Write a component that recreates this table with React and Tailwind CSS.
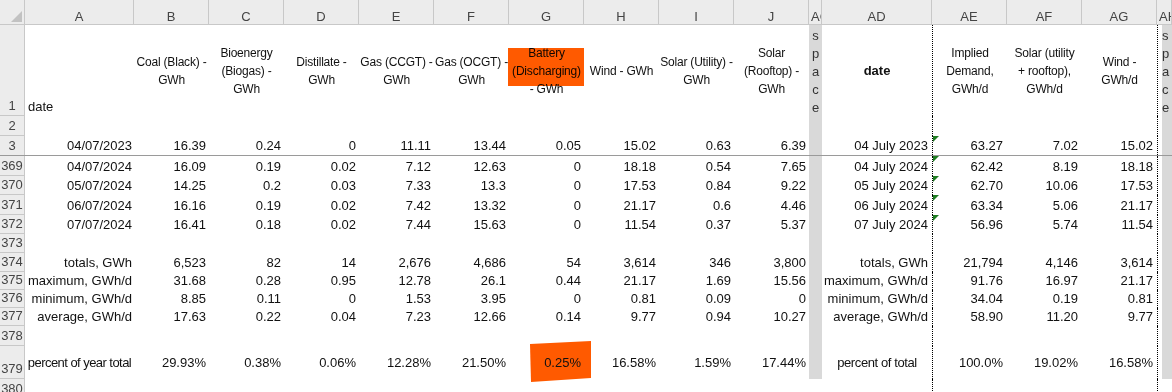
import React from "react";

const FONT = "font-['Liberation_Sans',Arial,sans-serif]";

const COLS = [
  { k: "A", w: "w-[109px]" },
  { k: "B", w: "w-[75px]" },
  { k: "C", w: "w-[75px]" },
  { k: "D", w: "w-[75px]" },
  { k: "E", w: "w-[75px]" },
  { k: "F", w: "w-[75px]" },
  { k: "G", w: "w-[75px]" },
  { k: "H", w: "w-[75px]" },
  { k: "I", w: "w-[75px]" },
  { k: "J", w: "w-[75px]" },
  { k: "AC", w: "w-[13px]", clip: true },
  { k: "AD", w: "w-[110px]" },
  { k: "AE", w: "w-[75px]" },
  { k: "AF", w: "w-[75px]" },
  { k: "AG", w: "w-[75px]" },
  { k: "AH", w: "w-[15px]", clip: true },
];

const heads = {
  B: ["Coal (Black) -", "GWh"],
  C: ["Bioenergy", "(Biogas) -", "GWh"],
  D: ["Distillate -", "GWh"],
  E: ["Gas (CCGT) -", "GWh"],
  F: ["Gas (OCGT) -", "GWh"],
  G: ["Battery", "(Discharging)", "- GWh"],
  H: ["Wind -  GWh"],
  I: ["Solar (Utility) -", "GWh"],
  J: ["Solar", "(Rooftop) -", "GWh"],
};

const rightHeads = [
  ["Implied", "Demand,", "GWh/d"],
  ["Solar (utility", "+ rooftop),", "GWh/d"],
  ["Wind -", "GWh/d"],
];

const rows = [
  { n: "2", h: "h-[20px]" },
  {
    n: "3", h: "h-[20px]", freeze: true, flag: true,
    left: ["04/07/2023", "16.39", "0.24", "0", "11.11", "13.44", "0.05", "15.02", "0.63", "6.39"],
    right: ["04 July 2023", "63.27", "7.02", "15.02"],
  },
  {
    n: "369", h: "h-[20px]", flag: true,
    left: ["04/07/2024", "16.09", "0.19", "0.02", "7.12", "12.63", "0", "18.18", "0.54", "7.65"],
    right: ["04 July 2024", "62.42", "8.19", "18.18"],
  },
  {
    n: "370", h: "h-[19px]", flag: true,
    left: ["05/07/2024", "14.25", "0.2", "0.03", "7.33", "13.3", "0", "17.53", "0.84", "9.22"],
    right: ["05 July 2024", "62.70", "10.06", "17.53"],
  },
  {
    n: "371", h: "h-[20px]", flag: true,
    left: ["06/07/2024", "16.16", "0.19", "0.02", "7.42", "13.32", "0", "21.17", "0.6", "4.46"],
    right: ["06 July 2024", "63.34", "5.06", "21.17"],
  },
  {
    n: "372", h: "h-[19px]", flag: true,
    left: ["07/07/2024", "16.41", "0.18", "0.02", "7.44", "15.63", "0", "11.54", "0.37", "5.37"],
    right: ["07 July 2024", "56.96", "5.74", "11.54"],
  },
  { n: "373", h: "h-[19px]" },
  {
    n: "374", h: "h-[19px]",
    left: ["totals, GWh", "6,523", "82", "14", "2,676", "4,686", "54", "3,614", "346", "3,800"],
    right: ["totals, GWh", "21,794", "4,146", "3,614"],
  },
  {
    n: "375", h: "h-[18px]",
    left: ["maximum, GWh/d", "31.68", "0.28", "0.95", "12.78", "26.1", "0.44", "21.17", "1.69", "15.56"],
    right: ["maximum, GWh/d", "91.76", "16.97", "21.17"],
  },
  {
    n: "376", h: "h-[18px]",
    left: ["minimum, GWh/d", "8.85", "0.11", "0", "1.53", "3.95", "0", "0.81", "0.09", "0"],
    right: ["minimum, GWh/d", "34.04", "0.19", "0.81"],
  },
  {
    n: "377", h: "h-[18px]",
    left: ["average, GWh/d", "17.63", "0.22", "0.04", "7.23", "12.66", "0.14", "9.77", "0.94", "10.27"],
    right: ["average, GWh/d", "58.90", "11.20", "9.77"],
  },
  { n: "378", h: "h-[20px]" },
  {
    n: "379", h: "h-[33px]", pct: true,
    left: ["percent of year total", "29.93%", "0.38%", "0.06%", "12.28%", "21.50%", "0.25%", "16.58%", "1.59%", "17.44%"],
    right: ["percent of total", "100.0%", "19.02%", "16.58%"],
  },
  { n: "380", h: "h-[20px]", last: true },
];

function RowNum({ n, noBorder }) {
  return (
    <div
      className={`w-[25px] shrink-0 flex items-end justify-center bg-[#ececec] border-r border-[#c8c8c8] leading-[18px] text-[#444] ${
        noBorder ? "" : "border-b"
      }`}
    >
      {n}
    </div>
  );
}

function SpaceCol({ wide }) {
  const letters = ["s", "p", "a", "c", "e"];
  if (wide) {
    return (
      <div className="w-[15px] shrink-0 flex border-l border-dotted border-black pl-[4px]">
        <div className="flex-1 flex flex-col items-start pt-[2px] bg-[#d9d9d9] leading-[18px] text-[#333]">
          {letters.map((l, i) => (
            <span key={i}>{l}</span>
          ))}
        </div>
      </div>
    );
  }
  return (
    <div className="w-[13px] shrink-0 flex flex-col items-center pt-[2px] bg-[#d9d9d9] leading-[18px] text-[#333]">
      {letters.map((l, i) => (
        <span key={i}>{l}</span>
      ))}
    </div>
  );
}

function ColumnHeader() {
  return (
    <div className="flex h-[25px] bg-[#ececec] text-[#444]">
      <div className="relative w-[25px] shrink-0 border-r border-b border-[#c8c8c8]">
        <svg className="absolute left-[11px] top-[11px]" width="12" height="12" viewBox="0 0 12 12">
          <polygon points="11,0 11,11 0,11" fill="#c2c2c2" />
        </svg>
      </div>
      {COLS.map((c) => (
        <div
          key={c.k}
          className={`${c.w} shrink-0 flex items-end leading-[14px] border-r border-b border-[#c8c8c8] whitespace-nowrap overflow-hidden ${
            c.clip ? "justify-start pl-[2px]" : "justify-center"
          }`}
        >
          {c.k}
        </div>
      ))}
    </div>
  );
}

function HeadCell({ lines, dotted, highlight }) {
  return (
    <div
      className={`relative w-[75px] shrink-0 flex flex-col items-center justify-center text-[12px] leading-[18px] tracking-[-0.2px] whitespace-nowrap ${
        dotted ? "border-l border-dotted border-black" : ""
      }`}
    >
      {lines.map((l, i) => (
        <span key={i}>{l}</span>
      ))}
      {highlight && (
        <div className="absolute left-[-1px] top-[23px] h-[38px] w-[76px] bg-[#ff5a00] mix-blend-multiply" />
      )}
    </div>
  );
}

function HeaderRow() {
  return (
    <div className="flex h-[91px]">
      <RowNum n="1" />
      <div className="w-[109px] shrink-0 flex items-end pl-[3px] leading-[18px]">date</div>
      {Object.keys(heads).map((k) => (
        <HeadCell key={k} lines={heads[k]} highlight={k === "G"} />
      ))}
      <SpaceCol />
      <div className="w-[110px] shrink-0 flex items-center justify-center font-bold">date</div>
      {rightHeads.map((l, i) => (
        <HeadCell key={i} lines={l} dotted={i === 0} />
      ))}
      <SpaceCol wide />
    </div>
  );
}

function DataRow({ row }) {
  const v = row.pct ? "items-center" : "items-end";
  const left = row.left || [];
  const right = row.right || [];
  return (
    <div className={`flex ${row.h} ${row.freeze ? "border-b border-[#9a9a9a]" : ""}`}>
      <RowNum n={row.n} noBorder={row.freeze} />
      <div
        className={`w-[109px] shrink-0 flex ${v} leading-[18px] whitespace-nowrap ${
          row.pct ? "justify-center tracking-[-0.55px]" : "justify-end pr-[2px]"
        }`}
      >
        {left[0]}
      </div>
      {COLS.slice(1, 10).map((c, i) => (
        <div
          key={c.k}
          className={`relative w-[75px] shrink-0 flex ${v} justify-end pr-[3px] leading-[18px] whitespace-nowrap`}
        >
          {row.pct && c.k === "G" && (
            <svg
              className="absolute left-[21px] top-[-5px] mix-blend-multiply"
              width="62"
              height="42"
              viewBox="0 0 62 42"
            >
              <polygon points="0,3 61,0 61,37 1,41" fill="#ff5a00" />
            </svg>
          )}
          <span className="relative">{left[i + 1]}</span>
        </div>
      ))}
      <div className={`w-[13px] shrink-0 ${row.last ? "" : "bg-[#d9d9d9]"}`} />
      <div
        className={`w-[110px] shrink-0 flex ${v} leading-[18px] whitespace-nowrap ${
          row.pct ? "justify-center tracking-[-0.4px]" : "justify-end pr-[4px]"
        }`}
      >
        {right[0]}
      </div>
      {[1, 2, 3].map((i) => (
        <div
          key={i}
          className={`relative w-[75px] shrink-0 flex ${v} justify-end pr-[4px] leading-[18px] whitespace-nowrap ${
            i === 1 ? "border-l border-dotted border-black" : ""
          }`}
        >
          {i === 1 && row.flag && (
            <svg className="absolute left-0 top-0" width="6" height="6" viewBox="0 0 6 6">
              <polygon points="0,0 6,0 0,6" fill="#1e7d22" />
            </svg>
          )}
          {right[i]}
        </div>
      ))}
      <div className="w-[15px] shrink-0 flex border-l border-dotted border-black pl-[4px]">
        {!row.last && <div className="flex-1 bg-[#d9d9d9]" />}
      </div>
    </div>
  );
}

export default function App() {
  return (
    <div className={`h-[392px] w-[1172px] overflow-hidden bg-white text-[13px] text-[#111] ${FONT}`}>
      <ColumnHeader />
      <HeaderRow />
      {rows.map((r) => (
        <DataRow key={r.n} row={r} />
      ))}
    </div>
  );
}
